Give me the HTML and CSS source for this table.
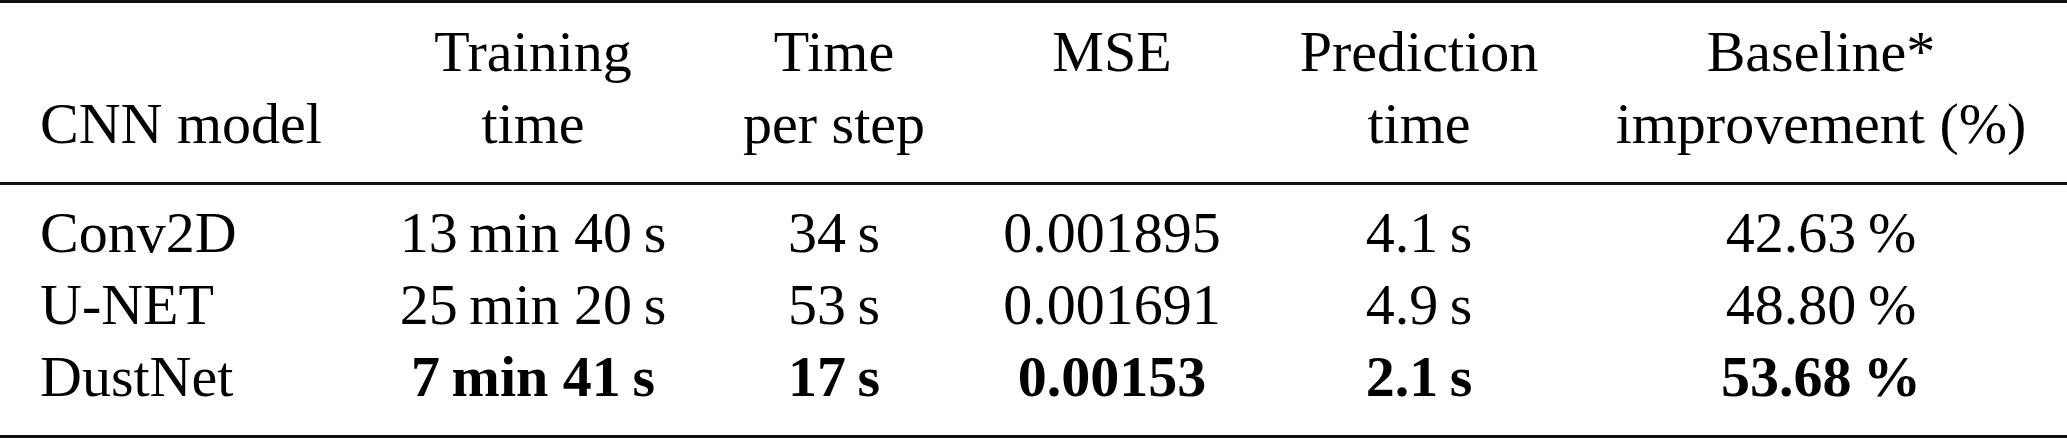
FILE: index.html
```html
<!DOCTYPE html>
<html>
  <head>
    <title>CNN model comparison</title>
    <link rel="stylesheet" href="styles.css">
  </head>
  <body>
    <table class="results">
      <colgroup>
        <col class="col-model">
        <col class="col-train">
        <col class="col-step">
        <col class="col-mse">
        <col class="col-pred">
        <col class="col-base">
      </colgroup>
      <thead>
        <tr>
          <th class="model-head">CNN model</th>
          <th>Training<br>time</th>
          <th>Time<br>per step</th>
          <th>MSE</th>
          <th>Prediction<br>time</th>
          <th class="last">Baseline*<br>improvement (%)</th>
        </tr>
      </thead>
      <tbody>
        <tr class="first-row">
          <td class="model">Conv2D</td>
          <td>13&thinsp;min 40&thinsp;s</td>
          <td>34&thinsp;s</td>
          <td>0.001895</td>
          <td>4.1&thinsp;s</td>
          <td class="last">42.63&thinsp;%</td>
        </tr>
        <tr>
          <td class="model">U-NET</td>
          <td>25&thinsp;min 20&thinsp;s</td>
          <td>53&thinsp;s</td>
          <td>0.001691</td>
          <td>4.9&thinsp;s</td>
          <td class="last">48.80&thinsp;%</td>
        </tr>
        <tr class="last-row best">
          <td class="model">DustNet</td>
          <td>7&thinsp;min 41&thinsp;s</td>
          <td>17&thinsp;s</td>
          <td>0.00153</td>
          <td>2.1&thinsp;s</td>
          <td class="last">53.68&thinsp;%</td>
        </tr>
      </tbody>
    </table>
  </body>
</html>
```

FILE: styles.css
```css
html{
  background-color: white;
}
body{
  margin: 0;
  overflow: hidden;
  font-family: "Liberation Serif", "Times New Roman", Times, serif;
  font-size: 58px;
  line-height: 72px;
  color: black;
}
.results{
  width: 2067px;
  table-layout: fixed;
  border-collapse: separate;
  border-spacing: 0;
}
.col-model{ width: 384px; }
.col-train{ width: 298px; }
.col-step{ width: 304px; }
.col-mse{ width: 252px; }
.col-pred{ width: 362px; }
.col-base{ width: 467px; }

th, td{
  padding: 0;
  text-align: center;
  white-space: nowrap;
  font-weight: normal;
}
th{
  vertical-align: top;
  padding-top: 13px;
  padding-bottom: 22px;
  border-top: 3px solid #111;
  border-bottom: 3px solid #111;
}
.model-head{
  vertical-align: bottom;
}
.model-head, .model{
  text-align: left;
  padding-left: 40px;
}
th.last, td.last{
  padding-right: 25px;
}
.first-row td{
  padding-top: 12px;
}
.last-row td{
  padding-bottom: 22px;
  border-bottom: 3px solid #111;
}
.best td{
  font-weight: bold;
}
.best td.model{
  font-weight: normal;
}
```
